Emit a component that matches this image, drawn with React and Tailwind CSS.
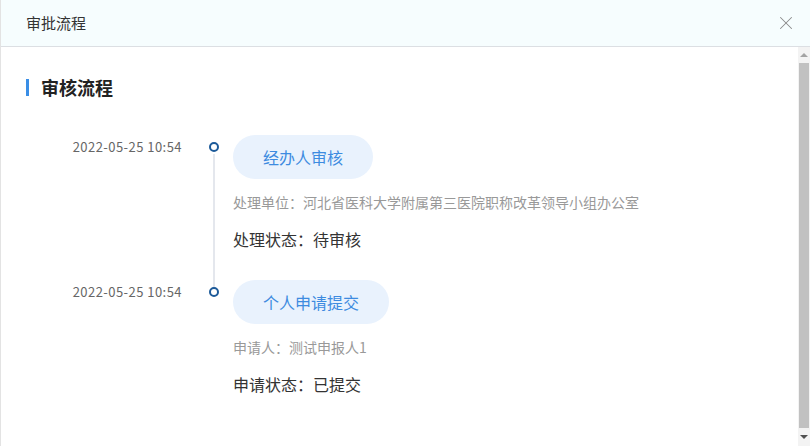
import { X } from 'lucide-react'

const steps = [
  {
    time: '2022-05-25 10:54',
    title: '经办人审核',
    info: '处理单位：河北省医科大学附属第三医院职称改革领导小组办公室',
    status: '处理状态：待审核',
    last: false,
  },
  {
    time: '2022-05-25 10:54',
    title: '个人申请提交',
    info: '申请人：测试申报人1',
    status: '申请状态：已提交',
    last: true,
  },
]

function Step({ step }) {
  return (
    <div className="relative flex">
      <div className="w-[156px] shrink-0 pt-[4px] text-right text-[13px] leading-[16px] tracking-[0.45px] text-[#666]">
        {step.time}
      </div>
      <div className="relative w-[51px] shrink-0">
        <div className="absolute left-[27px] top-[7px] h-[10px] w-[10px] rounded-full border-[2px] border-[#1c5a99] bg-white" />
        {!step.last && (
          <div className="absolute left-[31px] top-[19px] bottom-[-10px] w-[2px] bg-[#e4e7ed]" />
        )}
      </div>
      <div className={step.last ? 'pb-0' : 'pb-[30px]'}>
        <div className="inline-flex h-[44px] items-center rounded-full bg-[#e9f2fd] px-[30px] text-[16px] text-[#3d8be0]">
          {step.title}
        </div>
        <div className="mt-[13px] text-[14px] leading-[20px] text-[#999]">{step.info}</div>
        <div className="mt-[16px] text-[16px] leading-[22px] text-[#333]">{step.status}</div>
      </div>
    </div>
  )
}

function Scrollbar() {
  return (
    <div className="flex w-[12px] shrink-0 flex-col bg-[#f3f3f3]">
      <div className="flex h-[16px] items-center justify-center">
        <div className="h-0 w-0 border-x-[4px] border-b-[4px] border-x-transparent border-b-[#a3a3a3]" />
      </div>
      <div className="mx-[1px] flex-1 bg-[#c1c1c1]" />
      <div className="flex h-[18px] items-center justify-center">
        <div className="h-0 w-0 border-x-[4px] border-t-[4px] border-x-transparent border-t-[#505050]" />
      </div>
    </div>
  )
}

export default function App() {
  return (
    <div
      className="flex h-[446px] w-[810px] flex-col overflow-hidden border-l border-[#e3e3e3] bg-white"
      style={{ fontFamily: '"Noto Sans CJK SC", "Noto Sans", sans-serif' }}
    >
      <div className="flex h-[47px] shrink-0 items-center justify-between border-b border-[#dcdfe3] bg-[#f6fdfe] pl-[25px] pr-[13px]">
        <span className="text-[15px] text-[#333]">审批流程</span>
        <X className="h-[22px] w-[22px] text-[#8a8a8a]" strokeWidth={1.1} />
      </div>
      <div className="flex min-h-0 flex-1">
        <div className="flex-1 pl-[25px] pt-[28px]">
          <div className="flex items-center">
            <div className="h-[17px] w-[3px] bg-[#3a8ee6]" />
            <span className="ml-[12px] text-[18px] font-bold leading-[24px] text-[#222]">审核流程</span>
          </div>
          <div className="mt-[36px]">
            {steps.map((step, i) => (
              <Step key={i} step={step} />
            ))}
          </div>
        </div>
        <Scrollbar />
      </div>
    </div>
  )
}
